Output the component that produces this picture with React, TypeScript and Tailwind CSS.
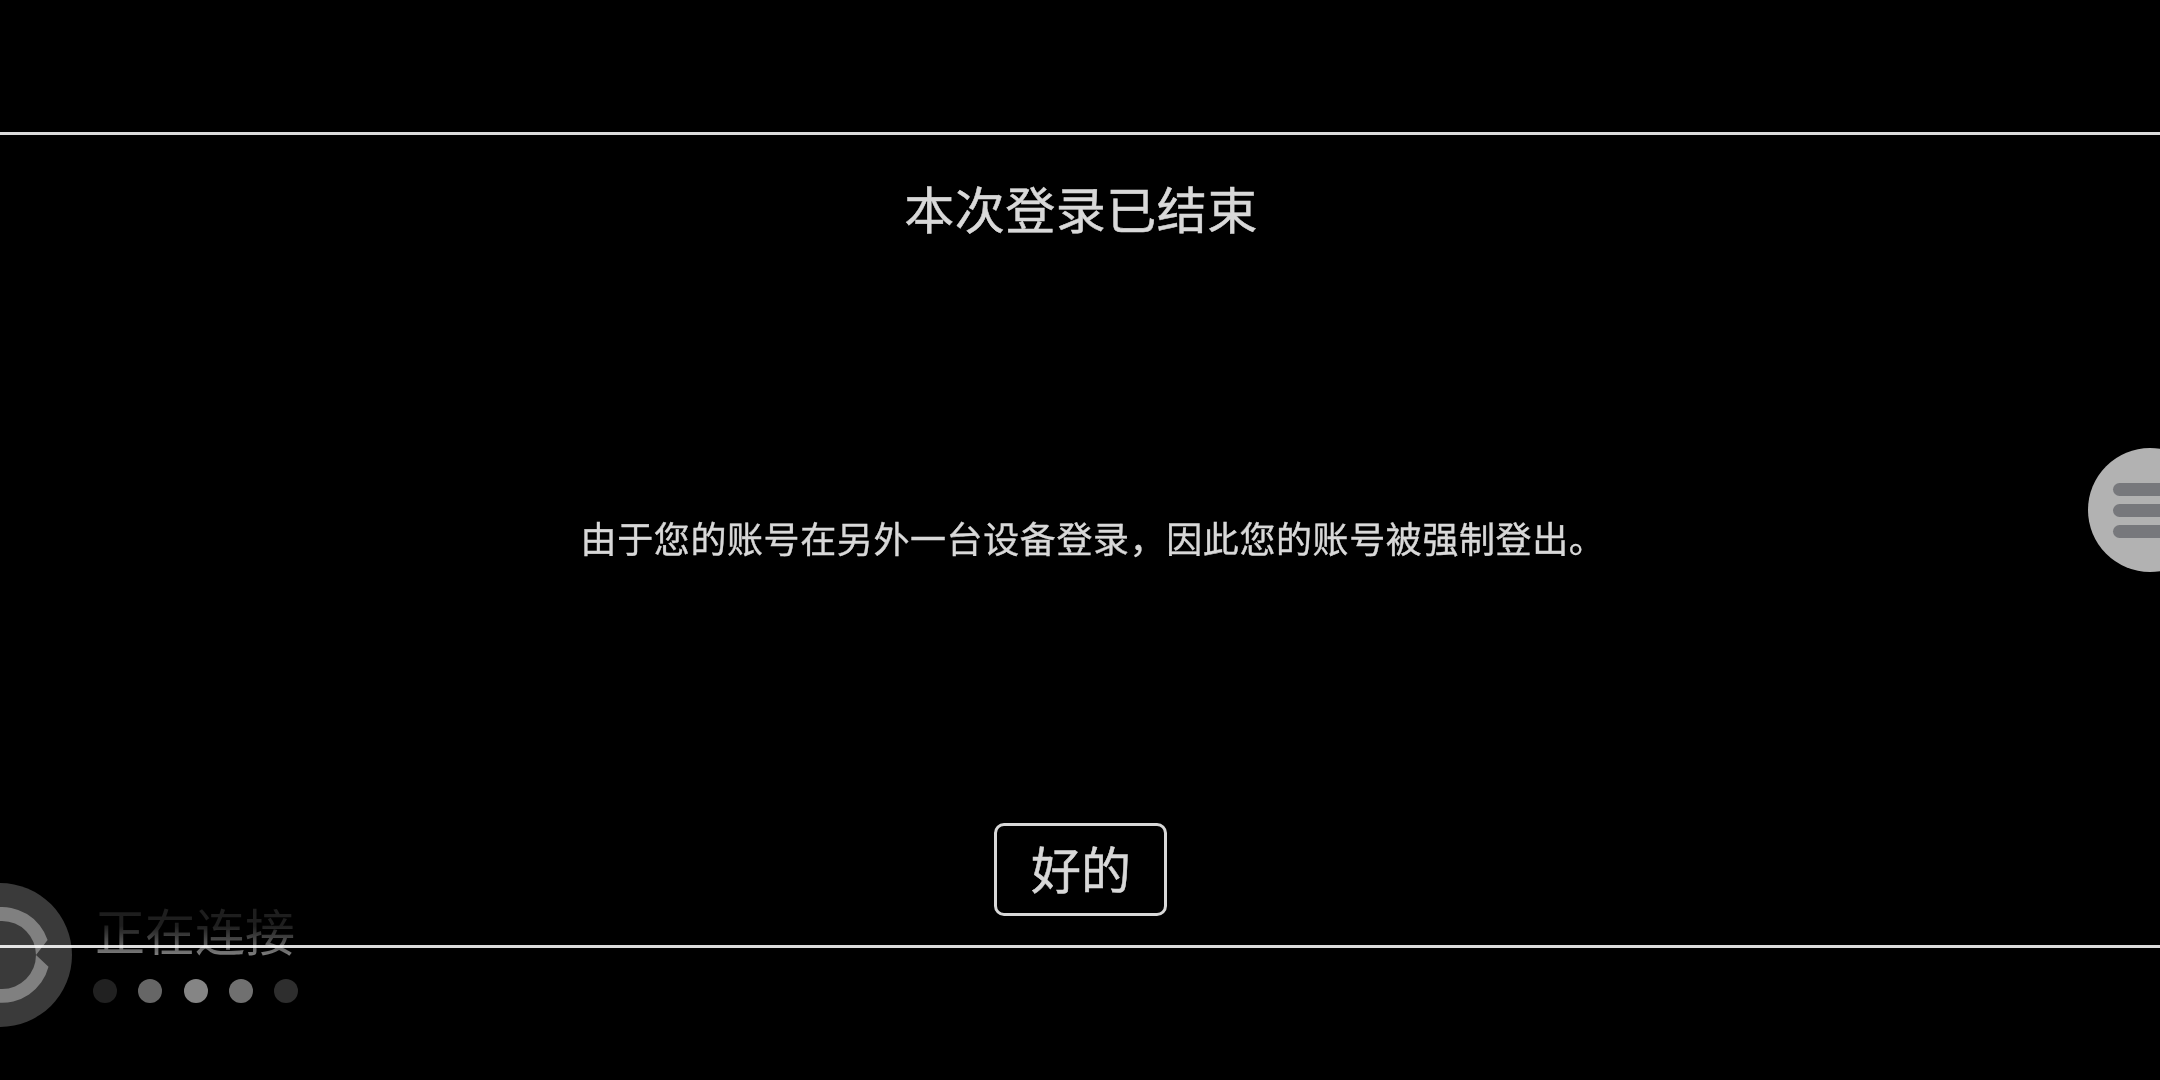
export default function App() {
  const dots = ["bg-[#212121]", "bg-[#666666]", "bg-[#858585]", "bg-[#707070]", "bg-[#2e2e2e]"];
  return (
    <div
      className="relative h-[1080px] w-[2160px] overflow-hidden bg-black text-[#d8d8d8]"
      style={{ fontFamily: '"Noto Sans CJK SC", "Noto Sans", sans-serif' }}
    >
      <div className="flex h-full flex-col">
        <div className="h-[135px] shrink-0 border-b-[3px] border-[#dcdcdc]" />
        <main className="flex h-[813px] shrink-0 flex-col items-center border-b-[3px] border-[#dcdcdc]">
          <h1 className="ml-[2px] mt-[47px] text-[50px] font-normal leading-[50px] tracking-[0.5px] [-webkit-text-stroke:0.5px_#d8d8d8]">本次登录已结束</h1>
          <p className="ml-[26px] mt-[280px] text-[36px] leading-[50px] tracking-[0.6px] [-webkit-text-stroke:0.4px_#d8d8d8]">由于您的账号在另外一台设备登录，因此您的账号被强制登出。</p>
          <button className="mt-[261px] flex h-[93px] w-[173px] items-center justify-center rounded-[10px] border-[3px] border-[#d8d8d8] pb-[5px] pl-[2px] text-[50px] leading-none [-webkit-text-stroke:0.5px_#d8d8d8]">
            好的
          </button>
        </main>
      </div>

      {/* floating menu ball */}
      <div className="absolute left-[2088px] top-[448px] flex h-[124px] w-[124px] flex-col gap-[8px] rounded-full bg-[#b2b2b2] pl-[25px] pt-[35px]">
        <div className="h-[13px] w-[60px] rounded-full bg-[#77787c]" />
        <div className="h-[13px] w-[60px] rounded-full bg-[#77787c]" />
        <div className="h-[13px] w-[60px] rounded-full bg-[#77787c]" />
      </div>

      {/* connecting overlay */}
      <svg className="absolute left-0 top-[883px] mix-blend-screen" width="72" height="144" viewBox="0 0 72 144">
        <circle cx="0" cy="72" r="72" fill="#3a3a3a" />
        <path d="M-46 72 A48 48 0 0 1 47.6 57 L36 72 L48.5 83.7 A48 48 0 0 1 -46 72 Z" fill="#808080" />
        <circle cx="2" cy="72" r="34" fill="#3a3a3a" />
      </svg>
      <div className="absolute left-[95px] top-[899px] flex flex-col mix-blend-screen">
        <div className="bg-gradient-to-b from-[#1e1e1e] from-45% to-[#8a8a8a] bg-clip-text text-[50px] leading-[60px] text-transparent">
          正在连接
        </div>
        <div className="ml-[-2px] mt-[20px] flex gap-[21.3px]">
          {dots.map((d, i) => (
            <div key={i} className={`h-[24px] w-[24px] rounded-full ${d}`} />
          ))}
        </div>
      </div>
    </div>
  );
}
